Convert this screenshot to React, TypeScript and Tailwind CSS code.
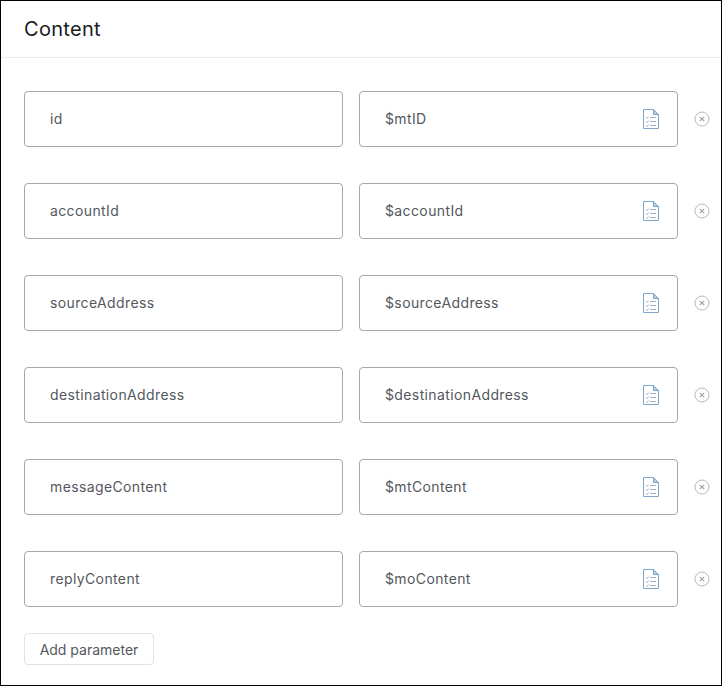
const rows = [
  ["id", "$mtID"],
  ["accountId", "$accountId"],
  ["sourceAddress", "$sourceAddress"],
  ["destinationAddress", "$destinationAddress"],
  ["messageContent", "$mtContent"],
  ["replyContent", "$moContent"],
];

function DocIcon() {
  return (
    <svg width="18" height="22" viewBox="0 0 18 22" fill="none" className="shrink-0">
      <path d="M1.5 1.5H11.5L16.5 6.5V20.5H1.5Z" fill="#fff" stroke="#7fa6c6" strokeWidth="1" />
      <path d="M11.5 1.5V6.5H16.5Z" fill="#b9cfe0" stroke="#7fa6c6" strokeWidth="1" />
      <g stroke="#a3b5c2" strokeWidth="1">
        <path d="M4 9.5L5 10.5L6.5 8.5" />
        <path d="M8 9.5H14" />
        <path d="M4 13.5L5 14.5L6.5 12.5" />
        <path d="M8 13.5H14" />
        <path d="M4 17.5L5 18.5L6.5 16.5" />
        <path d="M8 17.5H14" />
      </g>
    </svg>
  );
}

function RemoveIcon() {
  return (
    <svg width="16" height="16" viewBox="0 0 16 16" fill="none" className="shrink-0 mb-[1px]">
      <circle cx="8" cy="8" r="7" stroke="#b8b8b8" strokeWidth="1" />
      <path d="M5.8 5.8L10.2 10.2M10.2 5.8L5.8 10.2" stroke="#a0a0a0" strokeWidth="1.1" />
    </svg>
  );
}

export default function App() {
  return (
    <div className="w-[722px] h-[686px] bg-white border border-black font-['Inter','Liberation_Sans',sans-serif] overflow-hidden">
      <div className="h-[57px] border-b border-[#ececec] pl-[23px] flex items-center">
        <h2 className="text-[20px] font-normal tracking-[0.3px] text-[#1a1d21] leading-[28px]">Content</h2>
      </div>
      <div className="pl-[23px] pt-[33px] flex flex-col gap-[36px]">
        {rows.map(([k, v]) => (
          <div key={k} className="flex items-center">
            <div className="w-[319px] h-[56px] border border-[#a8a8a8] rounded-[4px] pl-[25px] pb-[2px] flex items-center text-[14px] tracking-[0.38px] text-[#54585d]">
              {k}
            </div>
            <div className="ml-[16px] w-[319px] h-[56px] border border-[#a8a8a8] rounded-[4px] pl-[25px] pr-[17px] flex items-center justify-between text-[14px] tracking-[0.38px] text-[#54585d]">
              <span className="mb-[2px]">{v}</span>
              <DocIcon />
            </div>
            <div className="ml-[16px] flex">
              <RemoveIcon />
            </div>
          </div>
        ))}
      </div>
      <button className="ml-[23px] mt-[26px] w-[130px] h-[32px] border border-[#e2e2e2] rounded-[4px] bg-white text-[14px] text-[#54585d]">
        Add parameter
      </button>
    </div>
  );
}
